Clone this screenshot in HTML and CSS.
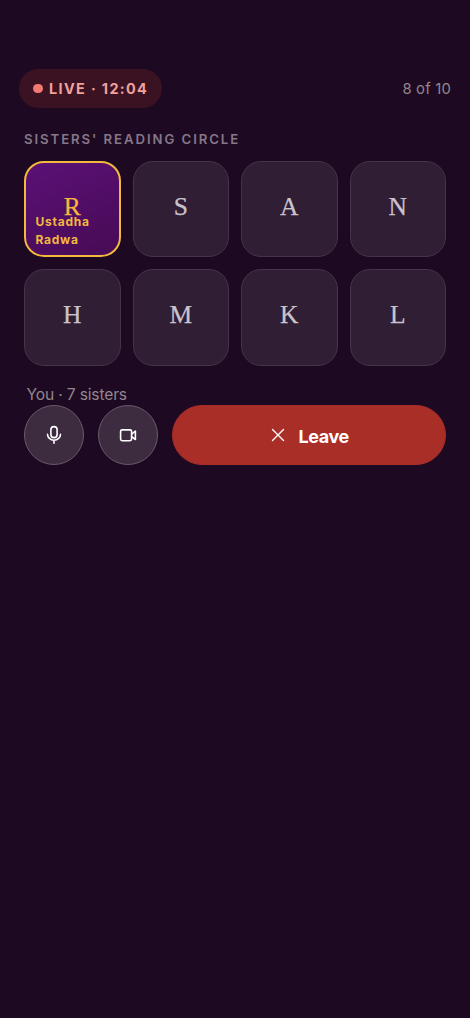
FILE: index.html
```html
<!DOCTYPE html>
<html lang="en">
<head>
<meta charset="utf-8">
<meta name="viewport" content="width=device-width, initial-scale=1">
<title>Sisters' Reading Circle</title>
<link rel="stylesheet" href="styles.css">
</head>
<body>
<main class="room">
  <header class="topbar">
    <div class="live"><span class="dot"></span><span class="live-text">LIVE · 12:04</span></div>
    <div class="count">8 of 10</div>
  </header>
  <section class="circle">
    <h1 class="title">SISTERS' READING CIRCLE</h1>
    <div class="grid">
      <div class="tile host"><span class="letter">R</span><span class="name">Ustadha Radwa</span></div>
      <div class="tile"><span class="letter">S</span></div>
      <div class="tile"><span class="letter">A</span></div>
      <div class="tile"><span class="letter">N</span></div>
      <div class="tile"><span class="letter">H</span></div>
      <div class="tile"><span class="letter">M</span></div>
      <div class="tile"><span class="letter">K</span></div>
      <div class="tile"><span class="letter">L</span></div>
    </div>
    <p class="summary">You · 7 sisters</p>
    <div class="controls">
      <button class="round" aria-label="Microphone">
        <svg width="20" height="20" viewBox="0 0 20 20"><rect x="6.9" y="1.6" width="6.2" height="11" rx="3.1"/><path d="M3.5 9.2a6.5 6 0 0 0 13 0M10 15.3v3"/></svg>
      </button>
      <button class="round" aria-label="Camera">
        <svg width="20" height="20" viewBox="0 0 20 20"><rect x="2.6" y="4.9" width="11" height="10.8" rx="1.6"/><path d="M13.6 9.1l3.8-2.9v8.3l-3.8-2.9"/></svg>
      </button>
      <button class="leave">
        <svg width="14" height="14" viewBox="0 0 14 14"><path d="M1.5 1.5l11 11M12.5 1.5l-11 11"/></svg>
        <span>Leave</span>
      </button>
    </div>
  </section>
</main>
</body>
</html>
```
FILE: styles.css
```css
* { box-sizing: border-box; }
body {
  margin: 0;
  background: #1d0a22;
  font-family: Inter, "Liberation Sans", sans-serif;
}
.room { min-height: 1018px; padding-top: 69px; }
.topbar {
  display: flex;
  justify-content: space-between;
  align-items: center;
  padding: 0 19px;
}
.live {
  display: flex;
  align-items: center;
  gap: 6.5px;
  height: 39px;
  width: 143px;
  padding-left: 14px;
  border-radius: 20px;
  background: #3b1222;
  color: #f1a19c;
  font-size: 14.4px;
  font-weight: 700;
  letter-spacing: 1.35px;
  white-space: nowrap;
}
.dot { width: 9.6px; height: 9.6px; border-radius: 50%; background: #f27871; }
.count { color: #92858f; font-size: 14.8px; letter-spacing: .2px; }
.circle { padding: 22px 24px 0; }
.title {
  margin: 0;
  color: #857788;
  font-size: 13.2px;
  font-weight: 600;
  line-height: 18px;
  letter-spacing: 1.92px;
}
.grid {
  display: grid;
  grid-template-columns: repeat(4, 1fr);
  gap: 12px;
  margin-top: 12.5px;
}
.tile {
  position: relative;
  display: flex;
  align-items: center;
  justify-content: center;
  height: 96.5px;
  padding-bottom: 4px;
  border: 1.2px solid #453447;
  border-radius: 20px;
  background: #301e34;
  color: #cbc3cc;
}
.letter {
  font-family: "Liberation Serif", serif;
  font-size: 25.5px;
  line-height: 36px;
  -webkit-text-stroke: .25px currentColor;
}
.host {
  border: 2px solid #f2b83f;
  background: linear-gradient(155deg, #5b1076, #470b55);
  color: #f2b83f;
}
.name {
  position: absolute;
  left: 9.5px;
  right: 10px;
  bottom: 6px;
  font-size: 12px;
  font-weight: 700;
  line-height: 18px;
  letter-spacing: .75px;
}
.summary {
  margin: 18px 0 0 2.5px;
  color: #92858f;
  font-size: 15.6px;
  line-height: 21.4px;
  letter-spacing: -.16px;
}
.controls { display: flex; gap: 14.2px; }
button { font: inherit; color: #fff; margin: 0; padding: 0; }
.round {
  display: flex;
  align-items: center;
  justify-content: center;
  flex: none;
  width: 60px;
  height: 60px;
  border: 1.2px solid #695a6b;
  border-radius: 50%;
  background: #3d2b40;
}
svg { fill: none; stroke: #fff; stroke-width: 1.6; stroke-linecap: round; stroke-linejoin: round; }
.leave {
  display: flex;
  flex: 1;
  align-items: center;
  justify-content: center;
  gap: 13px;
  height: 60px;
  padding-left: 2px;
  border: 1px solid #a92c27;
  border-radius: 30px;
  background: #aa2e28;
  font-size: 18px;
  font-weight: 700;
  letter-spacing: -.4px;
}
.leave svg { stroke-width: 1.4; }
.leave span { position: relative; top: 1.5px; }
```
